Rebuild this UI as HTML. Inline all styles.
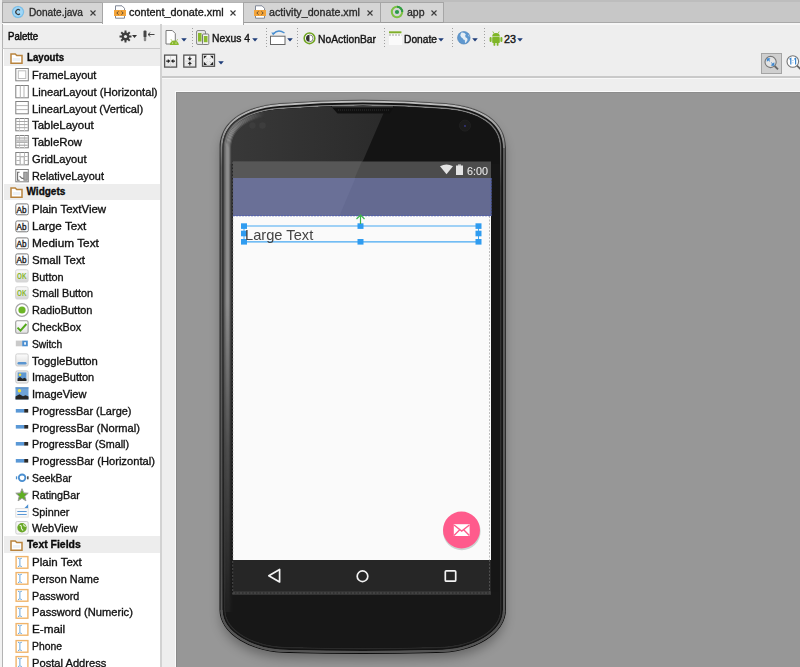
<!DOCTYPE html>
<html><head><meta charset="utf-8"><title>content_donate.xml</title>
<style>
*{margin:0;padding:0;box-sizing:border-box}
html,body{width:800px;height:667px;overflow:hidden;background:#eeeeee;font-family:"Liberation Sans",sans-serif}
.a{position:absolute}
.tb{-webkit-text-stroke:0.35px currentColor}
.tx{position:absolute;white-space:nowrap;transform-origin:0 0;font-family:"Liberation Sans",sans-serif;-webkit-text-stroke:0.32px currentColor}
svg{overflow:visible}
</style></head><body>
<div class="a" style="left:0;top:0;width:800px;height:24px;background:#c7c7c7"></div>
<div class="a" style="left:0;top:0;width:800px;height:2px;background:#bdbdbd"></div>
<div class="a" style="left:0;top:22px;width:800px;height:1px;background:#a9a9a9"></div>
<div class="a" style="left:0;top:23px;width:800px;height:1.5px;background:#f6f6f6"></div>
<div class="a" style="left:443px;top:2px;width:1px;height:20px;background:#b0b0b0"></div>
<div class="a" style="left:0;top:0;width:2px;height:24px;background:#ececec"></div>
<div class="a" style="left:2px;top:2px;width:101px;height:21px;background:#d5d5d5;border:1px solid #a6a6a6;border-bottom-color:#9c9c9c"></div>
<div class="a" style="left:102px;top:2px;width:142px;height:23px;background:#ffffff;border-left:1px solid #a6a6a6;border-right:1px solid #a6a6a6;border-top:1px solid #b4b4b4"></div>
<div class="a" style="left:243px;top:2px;width:138px;height:21px;background:#d5d5d5;border:1px solid #a6a6a6;border-bottom-color:#9c9c9c"></div>
<div class="a" style="left:380px;top:2px;width:64px;height:21px;background:#d5d5d5;border:1px solid #a6a6a6;border-bottom-color:#9c9c9c"></div>
<svg class="a" style="left:11px;top:5px" width="14" height="14" viewBox="0 0 14 14"><circle cx="7" cy="7" r="6.3" fill="#6ab9ec" stroke="#f2d9c0" stroke-width="0.5"/><circle cx="7" cy="7" r="5" fill="#9fd6f6"/><path d="M8.9 5.3A2.4 2.4 0 1 0 8.9 8.7" fill="none" stroke="#3b3b3b" stroke-width="1.2"/></svg>
<svg class="a" style="left:114px;top:4.5px" width="12" height="14" viewBox="0 0 12 14"><path d="M1.5 0.8H8L10.5 3.3V13.2H1.5Z" fill="#fff" stroke="#7f8796" stroke-width="1"/><rect x="0" y="5" width="12" height="6" fill="#f3a43a"/><path d="M4.6 6.3L2.8 8L4.6 9.7M7.4 6.3L9.2 8L7.4 9.7" fill="none" stroke="#5a4a30" stroke-width="0.9"/></svg>
<svg class="a" style="left:254px;top:4.5px" width="12" height="14" viewBox="0 0 12 14"><path d="M1.5 0.8H8L10.5 3.3V13.2H1.5Z" fill="#fff" stroke="#7f8796" stroke-width="1"/><rect x="0" y="5" width="12" height="6" fill="#f3a43a"/><path d="M4.6 6.3L2.8 8L4.6 9.7M7.4 6.3L9.2 8L7.4 9.7" fill="none" stroke="#5a4a30" stroke-width="0.9"/></svg>
<svg class="a" style="left:390px;top:5px" width="14" height="14" viewBox="0 0 14 14"><circle cx="7" cy="7" r="5.2" fill="none" stroke="#7cc143" stroke-width="2"/><path d="M7 1.8A5.2 5.2 0 0 1 12.2 7" fill="none" stroke="#2e9a46" stroke-width="2"/><circle cx="7" cy="7" r="2.1" fill="#2a9a4a"/></svg>
<svg class="a" style="left:89.5px;top:9.8px" width="6" height="6" viewBox="0 0 6 6"><path d="M0.5 0.5L5.5 5.5M5.5 0.5L0.5 5.5" stroke="#3c3c3c" stroke-width="1.1"/></svg>
<svg class="a" style="left:229.8px;top:9.8px" width="6" height="6" viewBox="0 0 6 6"><path d="M0.5 0.5L5.5 5.5M5.5 0.5L0.5 5.5" stroke="#3c3c3c" stroke-width="1.1"/></svg>
<svg class="a" style="left:367.3px;top:9.8px" width="6" height="6" viewBox="0 0 6 6"><path d="M0.5 0.5L5.5 5.5M5.5 0.5L0.5 5.5" stroke="#3c3c3c" stroke-width="1.1"/></svg>
<svg class="a" style="left:430.5px;top:9.8px" width="6" height="6" viewBox="0 0 6 6"><path d="M0.5 0.5L5.5 5.5M5.5 0.5L0.5 5.5" stroke="#3c3c3c" stroke-width="1.1"/></svg>
<div class="a" style="left:0;top:24px;width:2px;height:643px;background:#f2f2f2"></div>
<div class="a" style="left:2px;top:24px;width:158px;height:643px;background:#ffffff;border-left:1px solid #b3b3b3"></div>
<div class="a" style="left:2px;top:25px;width:158px;height:23.5px;background:#eeeeee;border-left:1px solid #b3b3b3;border-bottom:1.5px solid #c9c9c9"></div>
<svg class="a" style="left:119px;top:30px" width="13" height="13" viewBox="0 0 13 13"><g fill="#3e3e3e" transform="translate(6.5 6.5)"><rect x="-1" y="-6" width="2" height="3" transform="rotate(0)"/><rect x="-1" y="-6" width="2" height="3" transform="rotate(45)"/><rect x="-1" y="-6" width="2" height="3" transform="rotate(90)"/><rect x="-1" y="-6" width="2" height="3" transform="rotate(135)"/><rect x="-1" y="-6" width="2" height="3" transform="rotate(180)"/><rect x="-1" y="-6" width="2" height="3" transform="rotate(225)"/><rect x="-1" y="-6" width="2" height="3" transform="rotate(270)"/><rect x="-1" y="-6" width="2" height="3" transform="rotate(315)"/><circle r="3.9"/></g><circle cx="6.5" cy="6.5" r="1.6" fill="#ececec"/></svg>
<svg class="a" style="left:132px;top:35px" width="5" height="3" viewBox="0 0 5 3"><path d="M0 0H5L2.5 3Z" fill="#333"/></svg>
<svg class="a" style="left:142px;top:30px" width="14" height="12" viewBox="0 0 14 12"><rect x="1.5" y="0.5" width="3" height="7" rx="1" fill="#444"/><rect x="1.8" y="7" width="2.4" height="4.3" rx="1" fill="#888"/><path d="M6 4.5H12.5M6 4.5L8.3 2.5M6 4.5L8.3 6.5" stroke="#444" stroke-width="1" fill="none"/></svg>
<div class="a" style="left:4px;top:49.30px;width:156px;height:16.5px;background:#ededed"></div>
<svg class="a" style="left:9.5px;top:52.60px" width="13" height="11" viewBox="0 0 12.5 11"><path d="M0.75 1H5L6.5 2.5H11.75V10.25H0.75Z" fill="#fff" stroke="#b9843e" stroke-width="1.5"/><rect x="2.5" y="5" width="7.5" height="3" fill="#eef2f6"/></svg>
<svg class="a" style="left:15px;top:65.79px" width="14" height="17" viewBox="0 0 14 17"><rect x="0.8" y="2.5" width="12.5" height="12.3" rx="0" fill="#fff" stroke="#808080" stroke-width="1"/><rect x="3.3" y="4.8" width="7.5" height="7.7" fill="none" stroke="#bdbdbd" stroke-width="1"/></svg>
<svg class="a" style="left:15px;top:82.58px" width="14" height="17" viewBox="0 0 14 17"><rect x="0.8" y="2.5" width="12.5" height="12.3" rx="0" fill="#fff" stroke="#808080" stroke-width="1"/><path d="M5.3 2.5V14.8M9 2.5V14.8" stroke="#b5b5b5" stroke-width="1"/></svg>
<svg class="a" style="left:15px;top:99.37px" width="14" height="17" viewBox="0 0 14 17"><rect x="0.8" y="2.5" width="12.5" height="12.3" rx="0" fill="#fff" stroke="#808080" stroke-width="1"/><path d="M1 6.6H13M1 10.6H13" stroke="#b5b5b5" stroke-width="1"/></svg>
<svg class="a" style="left:15px;top:116.16px" width="14" height="17" viewBox="0 0 14 17"><rect x="0.8" y="2.5" width="12.5" height="12.3" rx="0" fill="#fff" stroke="#808080" stroke-width="1"/><path d="M4.5 2.5V14.8M9.5 2.5V14.8" stroke="#d4d4d4" stroke-width="1"/><path d="M1.3 5.5H12.7M1.3 8.6H12.7M1.3 11.7H12.7" stroke="#a6a6a6" stroke-width="1"/></svg>
<svg class="a" style="left:15px;top:132.95px" width="14" height="17" viewBox="0 0 14 17"><rect x="0.8" y="2.5" width="12.5" height="12.3" rx="0" fill="#fff" stroke="#808080" stroke-width="1"/><path d="M4.5 2.5V14.8M9.5 2.5V14.8" stroke="#d4d4d4" stroke-width="1"/><path d="M1.3 5H12.7M1.3 7.2H12.7M1.3 9.4H12.7M1.3 12.2H12.7" stroke="#9a9a9a" stroke-width="1"/><rect x="1.3" y="7.2" width="11.4" height="2.2" fill="#c8c8c8"/></svg>
<svg class="a" style="left:15px;top:149.74px" width="14" height="17" viewBox="0 0 14 17"><rect x="0.8" y="2.5" width="12.5" height="12.3" rx="0" fill="#fff" stroke="#808080" stroke-width="1"/><path d="M1.3 6.5H12.7M1.3 10.5H12.7M5 2.5V14.8M9.5 2.5V14.8" stroke="#b8b8b8" stroke-width="1"/><rect x="5.5" y="7" width="3.5" height="7.3" fill="#fff" stroke="#b8b8b8" stroke-width="0.8"/></svg>
<svg class="a" style="left:15px;top:166.53px" width="14" height="17" viewBox="0 0 14 17"><rect x="0.8" y="2.5" width="12.5" height="12.3" rx="0" fill="#fff" stroke="#808080" stroke-width="1"/><path d="M4.6 5.2H2.6V13.2H4.6M4.6 9.2L7 11.4H8.8" stroke="#6e6e6e" stroke-width="1.1" fill="none"/><rect x="8.8" y="5.2" width="3.4" height="8" fill="#a9a9a9" stroke="#777" stroke-width="0.8"/></svg>
<div class="a" style="left:4px;top:183.62px;width:156px;height:16.5px;background:#ededed"></div>
<svg class="a" style="left:9.5px;top:186.92px" width="13" height="11" viewBox="0 0 12.5 11"><path d="M0.75 1H5L6.5 2.5H11.75V10.25H0.75Z" fill="#fff" stroke="#b9843e" stroke-width="1.5"/><rect x="2.5" y="5" width="7.5" height="3" fill="#eef2f6"/></svg>
<svg class="a" style="left:15px;top:200.11px" width="14" height="17" viewBox="0 0 14 17"><rect x="0.8" y="3.9" width="12.5" height="10.9" rx="1.5" fill="#fff" stroke="#7a7a7a" stroke-width="1"/><text x="1.5" y="12.5" font-family="Liberation Sans" font-size="9.4" fill="#222" stroke="#222" stroke-width="0.4" textLength="10" lengthAdjust="spacingAndGlyphs">Ab</text></svg>
<svg class="a" style="left:15px;top:216.90px" width="14" height="17" viewBox="0 0 14 17"><rect x="0.8" y="3.9" width="12.5" height="10.9" rx="1.5" fill="#fff" stroke="#7a7a7a" stroke-width="1"/><text x="1.5" y="12.5" font-family="Liberation Sans" font-size="9.4" fill="#222" stroke="#222" stroke-width="0.4" textLength="10" lengthAdjust="spacingAndGlyphs">Ab</text></svg>
<svg class="a" style="left:15px;top:233.69px" width="14" height="17" viewBox="0 0 14 17"><rect x="0.8" y="3.9" width="12.5" height="10.9" rx="1.5" fill="#fff" stroke="#7a7a7a" stroke-width="1"/><text x="1.5" y="12.5" font-family="Liberation Sans" font-size="9.4" fill="#222" stroke="#222" stroke-width="0.4" textLength="10" lengthAdjust="spacingAndGlyphs">Ab</text></svg>
<svg class="a" style="left:15px;top:250.48px" width="14" height="17" viewBox="0 0 14 17"><rect x="0.8" y="3.9" width="12.5" height="10.9" rx="1.5" fill="#fff" stroke="#7a7a7a" stroke-width="1"/><text x="1.5" y="12.5" font-family="Liberation Sans" font-size="9.4" fill="#222" stroke="#222" stroke-width="0.4" textLength="10" lengthAdjust="spacingAndGlyphs">Ab</text></svg>
<svg class="a" style="left:15px;top:267.27px" width="14" height="17" viewBox="0 0 14 17"><defs><linearGradient id="okg" x1="0" y1="0" x2="0" y2="1"><stop offset="0" stop-color="#fbfbfb"/><stop offset="1" stop-color="#d4d4d4"/></linearGradient></defs><rect x="0.6" y="2.8" width="12.5" height="12.2" rx="1.5" fill="url(#okg)" stroke="#d6d6d6" stroke-width="1"/><text x="2.1" y="12.2" font-family="Liberation Sans" font-weight="bold" font-size="8.4" fill="#86b62a" textLength="9.4" lengthAdjust="spacingAndGlyphs">OK</text></svg>
<svg class="a" style="left:15px;top:284.06px" width="14" height="17" viewBox="0 0 14 17"><defs><linearGradient id="okg" x1="0" y1="0" x2="0" y2="1"><stop offset="0" stop-color="#fbfbfb"/><stop offset="1" stop-color="#d4d4d4"/></linearGradient></defs><rect x="0.6" y="2.8" width="12.5" height="12.2" rx="1.5" fill="url(#okg)" stroke="#d6d6d6" stroke-width="1"/><text x="2.1" y="12.2" font-family="Liberation Sans" font-weight="bold" font-size="8.4" fill="#86b62a" textLength="9.4" lengthAdjust="spacingAndGlyphs">OK</text></svg>
<svg class="a" style="left:15px;top:300.85px" width="14" height="17" viewBox="0 0 14 17"><circle cx="7" cy="9" r="6.3" fill="#fff" stroke="#a4a4a4" stroke-width="1.2"/><circle cx="7" cy="9" r="3.6" fill="#6cb526"/></svg>
<svg class="a" style="left:15px;top:317.64px" width="14" height="17" viewBox="0 0 14 17"><defs><linearGradient id="ckg" x1="0" y1="0" x2="0" y2="1"><stop offset="0" stop-color="#ffffff"/><stop offset="1" stop-color="#e2e2e2"/></linearGradient></defs><rect x="0.7" y="2.7" width="12.4" height="12.6" rx="1.5" fill="url(#ckg)" stroke="#9c9c9c" stroke-width="1.1"/><path d="M2.5 9.6L5.5 12.7L11.4 6" fill="none" stroke="#52a81a" stroke-width="1.9"/></svg>
<svg class="a" style="left:15px;top:334.43px" width="14" height="17" viewBox="0 0 14 17"><rect x="0.8" y="6.6" width="6.5" height="5.7" fill="#cacaca"/><rect x="7.2" y="6.6" width="5.6" height="5.7" fill="#4a8ed0"/><rect x="9.2" y="8.2" width="1.7" height="2.5" fill="#fff"/></svg>
<svg class="a" style="left:15px;top:351.22px" width="14" height="17" viewBox="0 0 14 17"><defs><linearGradient id="tgg" x1="0" y1="0" x2="0" y2="1"><stop offset="0" stop-color="#fdfdfd"/><stop offset="1" stop-color="#dcdcdc"/></linearGradient></defs><rect x="0.8" y="2.9" width="12.4" height="12.1" rx="1.5" fill="url(#tgg)" stroke="#cfcfcf" stroke-width="1"/><rect x="2.5" y="11" width="9" height="2.4" rx="1.2" fill="#5a95d0"/></svg>
<svg class="a" style="left:15px;top:368.01px" width="14" height="17" viewBox="0 0 14 17"><rect x="0.8" y="2.9" width="12.4" height="12.1" rx="1.5" fill="#ececec" stroke="#c6c6c6" stroke-width="1"/><rect x="2.6" y="4.4" width="8.8" height="8.6" fill="#5f98d2"/><path d="M2.6 13V10.5L5 9L7.5 10.8L9.5 9.7L11.4 11V13Z" fill="#262626"/><circle cx="5" cy="6.8" r="1.3" fill="#f6e03a"/></svg>
<svg class="a" style="left:15px;top:384.80px" width="14" height="17" viewBox="0 0 14 17"><rect x="0.5" y="2.4" width="13" height="12" fill="#6ea3d8"/><rect x="0.5" y="2.4" width="13" height="1" fill="#4f86c0"/><path d="M0.5 14.4V11.6L4.5 9.3L8 11.3L10.5 10.2L13.5 11.6V14.4Z" fill="#262626"/><circle cx="4.5" cy="5.8" r="1.7" fill="#f4e23a"/></svg>
<svg class="a" style="left:15px;top:401.59px" width="14" height="17" viewBox="0 0 14 17"><rect x="0.8" y="7" width="8.5" height="3.6" fill="#5a98d6"/><rect x="9.2" y="7" width="4" height="3.6" fill="#2a2a2a"/></svg>
<svg class="a" style="left:15px;top:418.38px" width="14" height="17" viewBox="0 0 14 17"><rect x="0.8" y="7" width="8.5" height="3.6" fill="#5a98d6"/><rect x="9.2" y="7" width="4" height="3.6" fill="#2a2a2a"/></svg>
<svg class="a" style="left:15px;top:435.17px" width="14" height="17" viewBox="0 0 14 17"><rect x="0.8" y="7" width="8.5" height="3.6" fill="#5a98d6"/><rect x="9.2" y="7" width="4" height="3.6" fill="#2a2a2a"/></svg>
<svg class="a" style="left:15px;top:451.96px" width="14" height="17" viewBox="0 0 14 17"><rect x="0.8" y="7" width="8.5" height="3.6" fill="#5a98d6"/><rect x="9.2" y="7" width="4" height="3.6" fill="#2a2a2a"/></svg>
<svg class="a" style="left:15px;top:468.75px" width="14" height="17" viewBox="0 0 14 17"><circle cx="7.1" cy="8.8" r="3.3" fill="#fff" stroke="#4b8fd0" stroke-width="1.8"/><rect x="0.9" y="7.3" width="1.3" height="3" fill="#4b8fd0"/><rect x="12.2" y="7.3" width="1.3" height="3" fill="#2a2a2a"/></svg>
<svg class="a" style="left:15px;top:485.54px" width="14" height="17" viewBox="0 0 14 17"><path d="M7 2.7L8.7 6.9L13.2 7.2L9.8 10.2L10.9 14.8L7 12.3L3.1 14.8L4.2 10.2L0.8 7.2L5.3 6.9Z" fill="#5fae22" stroke="#9a9a9a" stroke-width="1"/></svg>
<svg class="a" style="left:15px;top:502.33px" width="14" height="17" viewBox="0 0 14 17"><path d="M9.5 5.9L13.2 2.2V5.9Z" fill="#4a8ed0"/><rect x="0.8" y="6.5" width="12.4" height="8.6" fill="#fafafa" stroke="#dadada" stroke-width="0.8"/><path d="M2.3 9.5H11.7M2.3 12.5H11.7" stroke="#5a98d6" stroke-width="1"/></svg>
<svg class="a" style="left:15px;top:519.12px" width="14" height="17" viewBox="0 0 14 17"><rect x="0.8" y="2.5" width="12.4" height="12.5" rx="1.5" fill="#f6f6f6" stroke="#cdcdcd" stroke-width="1"/><circle cx="7" cy="8.7" r="4.7" fill="#6aa828"/><path d="M4.6 6.2Q6.6 6.3 6.3 8.2T8.2 11.5M8.6 5.2Q8.4 6.8 10.7 7.5" stroke="#e9f5dc" stroke-width="1.1" fill="none"/></svg>
<div class="a" style="left:4px;top:536.21px;width:156px;height:16.5px;background:#ededed"></div>
<svg class="a" style="left:9.5px;top:539.51px" width="13" height="11" viewBox="0 0 12.5 11"><path d="M0.75 1H5L6.5 2.5H11.75V10.25H0.75Z" fill="#fff" stroke="#b9843e" stroke-width="1.5"/><rect x="2.5" y="5" width="7.5" height="3" fill="#eef2f6"/></svg>
<svg class="a" style="left:15px;top:552.70px" width="14" height="17" viewBox="0 0 14 17"><rect x="1.1" y="3.6" width="11.8" height="11.6" fill="#fff" stroke="#f0b46a" stroke-width="1.4"/><path d="M3 5.3Q4.6 5.3 4.9 6.3V12.6Q4.6 13.5 3 13.5M6.8 5.3Q5.2 5.3 4.9 6.3M6.8 13.5Q5.2 13.5 4.9 12.6" fill="none" stroke="#6aa6dc" stroke-width="1"/></svg>
<svg class="a" style="left:15px;top:569.49px" width="14" height="17" viewBox="0 0 14 17"><rect x="1.1" y="3.6" width="11.8" height="11.6" fill="#fff" stroke="#f0b46a" stroke-width="1.4"/><path d="M3 5.3Q4.6 5.3 4.9 6.3V12.6Q4.6 13.5 3 13.5M6.8 5.3Q5.2 5.3 4.9 6.3M6.8 13.5Q5.2 13.5 4.9 12.6" fill="none" stroke="#6aa6dc" stroke-width="1"/></svg>
<svg class="a" style="left:15px;top:586.28px" width="14" height="17" viewBox="0 0 14 17"><rect x="1.1" y="3.6" width="11.8" height="11.6" fill="#fff" stroke="#f0b46a" stroke-width="1.4"/><path d="M3 5.3Q4.6 5.3 4.9 6.3V12.6Q4.6 13.5 3 13.5M6.8 5.3Q5.2 5.3 4.9 6.3M6.8 13.5Q5.2 13.5 4.9 12.6" fill="none" stroke="#6aa6dc" stroke-width="1"/></svg>
<svg class="a" style="left:15px;top:603.07px" width="14" height="17" viewBox="0 0 14 17"><rect x="1.1" y="3.6" width="11.8" height="11.6" fill="#fff" stroke="#f0b46a" stroke-width="1.4"/><path d="M3 5.3Q4.6 5.3 4.9 6.3V12.6Q4.6 13.5 3 13.5M6.8 5.3Q5.2 5.3 4.9 6.3M6.8 13.5Q5.2 13.5 4.9 12.6" fill="none" stroke="#6aa6dc" stroke-width="1"/></svg>
<svg class="a" style="left:15px;top:619.86px" width="14" height="17" viewBox="0 0 14 17"><rect x="1.1" y="3.6" width="11.8" height="11.6" fill="#fff" stroke="#f0b46a" stroke-width="1.4"/><path d="M3 5.3Q4.6 5.3 4.9 6.3V12.6Q4.6 13.5 3 13.5M6.8 5.3Q5.2 5.3 4.9 6.3M6.8 13.5Q5.2 13.5 4.9 12.6" fill="none" stroke="#6aa6dc" stroke-width="1"/></svg>
<svg class="a" style="left:15px;top:636.65px" width="14" height="17" viewBox="0 0 14 17"><rect x="1.1" y="3.6" width="11.8" height="11.6" fill="#fff" stroke="#f0b46a" stroke-width="1.4"/><path d="M3 5.3Q4.6 5.3 4.9 6.3V12.6Q4.6 13.5 3 13.5M6.8 5.3Q5.2 5.3 4.9 6.3M6.8 13.5Q5.2 13.5 4.9 12.6" fill="none" stroke="#6aa6dc" stroke-width="1"/></svg>
<svg class="a" style="left:15px;top:653.44px" width="14" height="17" viewBox="0 0 14 17"><rect x="1.1" y="3.6" width="11.8" height="11.6" fill="#fff" stroke="#f0b46a" stroke-width="1.4"/><path d="M3 5.3Q4.6 5.3 4.9 6.3V12.6Q4.6 13.5 3 13.5M6.8 5.3Q5.2 5.3 4.9 6.3M6.8 13.5Q5.2 13.5 4.9 12.6" fill="none" stroke="#6aa6dc" stroke-width="1"/></svg>
<div class="a" style="left:160px;top:24px;width:2px;height:643px;background:#d2d2d2"></div>
<div class="a" style="left:162px;top:76px;width:638px;height:1.5px;background:#c9c9c9"></div>
<div class="a" style="left:162px;top:77.5px;width:638px;height:1px;background:#f8f8f8"></div>
<div class="a" style="left:174.5px;top:90.5px;width:626px;height:577px;background:#fbfbfb"></div>
<div class="a" style="left:175.5px;top:91.5px;width:625px;height:576px;background:#979797;border-left:1px solid #8a8a8a;border-top:1px solid #8c8c8c"></div>
<svg class="a" style="left:0;top:0" width="800" height="60" viewBox="0 0 800 60"><path d="M166 30.5H172.3L175.3 33.5V44H166Z" fill="#fff" stroke="#7a7a7a" stroke-width="1"/><path d="M169.8 45A4.5 4.6 0 0 1 178.8 45Z" fill="#8ab92d"/><circle cx="172.6" cy="43" r="0.55" fill="#fff"/><circle cx="176" cy="43" r="0.55" fill="#fff"/><path d="M171 39.3L172 40.8M177.6 39.3L176.6 40.8" stroke="#8ab92d" stroke-width="0.8"/></svg>
<svg class="a" style="left:181px;top:38px" width="6" height="4" viewBox="0 0 6 4"><path d="M0.2 0.3H5.8L3 3.6Z" fill="#1e3c78"/></svg>
<div class="a" style="left:192px;top:28px;width:1px;height:21px;background:repeating-linear-gradient(#a0a0a0 0 1px,transparent 1px 3px)"></div>
<svg class="a" style="left:0;top:0" width="800" height="60" viewBox="0 0 800 60"><rect x="196.5" y="30.5" width="9" height="14" rx="1.5" fill="#e6e6e6" stroke="#8a8a8a" stroke-width="1"/><rect x="198" y="33" width="3.5" height="8.5" fill="#8ab92d"/><rect x="202.5" y="34" width="6.3" height="10.5" rx="1" fill="#f2f2f2" stroke="#7a7a7a" stroke-width="1"/><rect x="203.8" y="36" width="3.7" height="6.2" fill="#8ab92d"/></svg>
<svg class="a" style="left:251.5px;top:38px" width="6" height="4" viewBox="0 0 6 4"><path d="M0.2 0.3H5.8L3 3.6Z" fill="#1e3c78"/></svg>
<div class="a" style="left:266px;top:28px;width:1px;height:21px;background:repeating-linear-gradient(#a0a0a0 0 1px,transparent 1px 3px)"></div>
<svg class="a" style="left:0;top:0" width="800" height="60" viewBox="0 0 800 60"><rect x="270.5" y="36.2" width="14.5" height="8.3" fill="#fff" stroke="#666" stroke-width="1"/><path d="M273.5 33.8Q278 28.5 284.5 33" fill="none" stroke="#4a8fd0" stroke-width="1.4"/><path d="M271.3 32.5L273.2 35.6L275.2 32.8Z" fill="#4a8fd0"/></svg>
<svg class="a" style="left:286.5px;top:38px" width="6" height="4" viewBox="0 0 6 4"><path d="M0.2 0.3H5.8L3 3.6Z" fill="#1e3c78"/></svg>
<div class="a" style="left:297px;top:28px;width:1px;height:21px;background:repeating-linear-gradient(#a0a0a0 0 1px,transparent 1px 3px)"></div>
<svg class="a" style="left:302.5px;top:31.5px" width="14" height="13" viewBox="0 0 14 13"><circle cx="6.5" cy="6.3" r="5.3" fill="#fff" stroke="#6fa31f" stroke-width="1.6"/><path d="M6.5 2.8A3.5 3.5 0 0 0 6.5 9.8Z" fill="#333"/><path d="M6.5 2.8A3.5 3.5 0 0 1 6.5 9.8" fill="none" stroke="#555" stroke-width="0.7"/></svg>
<div class="a" style="left:383.5px;top:28px;width:1px;height:21px;background:repeating-linear-gradient(#a0a0a0 0 1px,transparent 1px 3px)"></div>
<svg class="a" style="left:388.5px;top:30.5px" width="13" height="14" viewBox="0 0 13 14"><rect x="0" y="0" width="13" height="14" fill="#fafafa"/><rect x="0" y="0.3" width="12.5" height="2" fill="#7fae2a"/><path d="M0 4H12.5" stroke="#8a8a8a" stroke-width="0.8" stroke-dasharray="2 1"/></svg>
<svg class="a" style="left:437.5px;top:38px" width="6" height="4" viewBox="0 0 6 4"><path d="M0.2 0.3H5.8L3 3.6Z" fill="#1e3c78"/></svg>
<div class="a" style="left:452px;top:28px;width:1px;height:21px;background:repeating-linear-gradient(#a0a0a0 0 1px,transparent 1px 3px)"></div>
<svg class="a" style="left:456.5px;top:30.5px" width="14" height="14" viewBox="0 0 14 14"><circle cx="6.8" cy="6.8" r="6.3" fill="#5f98cf" stroke="#4a7fb5" stroke-width="0.6"/><path d="M4.5 1.6Q7.5 1.3 8.8 3.2Q7.6 4.6 8.6 6.2Q10.8 6.6 10.6 9Q9.6 10.8 8.4 12.3Q7.6 10.5 7.8 9Q6 8.8 5.6 7.2Q3.9 6.6 3.3 4.6Q3.6 2.6 4.5 1.6Z" fill="#e4edf5"/><path d="M11 3.2Q12.2 4.2 12.4 5.8Q11.4 5.2 11 3.2Z" fill="#e4edf5"/></svg>
<svg class="a" style="left:471.5px;top:38px" width="6" height="4" viewBox="0 0 6 4"><path d="M0.2 0.3H5.8L3 3.6Z" fill="#1e3c78"/></svg>
<div class="a" style="left:484px;top:28px;width:1px;height:21px;background:repeating-linear-gradient(#a0a0a0 0 1px,transparent 1px 3px)"></div>
<svg class="a" style="left:488.5px;top:30.5px" width="14" height="15" viewBox="0 0 14 15"><path d="M3.2 5.5A3.8 3.6 0 0 1 10.8 5.5Z" fill="#7fb627"/><path d="M3.8 0.5L5 2.6M10.2 0.5L9 2.6" stroke="#7fb627" stroke-width="0.8"/><rect x="3.2" y="6" width="7.6" height="6" rx="0.8" fill="#7fb627"/><rect x="0.6" y="6" width="2" height="5" rx="1" fill="#7fb627"/><rect x="11.4" y="6" width="2" height="5" rx="1" fill="#7fb627"/><rect x="4.5" y="11" width="1.8" height="3.8" rx="0.9" fill="#7fb627"/><rect x="7.7" y="11" width="1.8" height="3.8" rx="0.9" fill="#7fb627"/></svg>
<svg class="a" style="left:517px;top:38px" width="6" height="4" viewBox="0 0 6 4"><path d="M0.2 0.3H5.8L3 3.6Z" fill="#1e3c78"/></svg>
<svg class="a" style="left:0;top:0" width="800" height="80" viewBox="0 0 800 80"><defs><linearGradient id="r2g" x1="0" y1="0" x2="0" y2="1"><stop offset="0" stop-color="#fafafa"/><stop offset="1" stop-color="#e4e4e4"/></linearGradient></defs><rect x="164.6" y="55.1" width="12" height="12" fill="url(#r2g)" stroke="#555" stroke-width="1.3"/><path d="M170.6 56V66.5" stroke="#d0d0d0" stroke-width="0.8"/><path d="M166.2 61.1H169M175 61.1H172.2" stroke="#222" stroke-width="1.1"/><path d="M170.3 61.1L167.8 59V63.2Z M170.9 61.1L173.4 59V63.2Z" fill="#222"/><rect x="183.8" y="55.1" width="12" height="12" fill="url(#r2g)" stroke="#555" stroke-width="1.3"/><path d="M184.5 61.1H195" stroke="#d0d0d0" stroke-width="0.8"/><path d="M189.8 56.6V59.3M189.8 65.6V62.9" stroke="#222" stroke-width="1.1"/><path d="M189.8 60.8L187.7 58.3H191.9Z M189.8 61.4L187.7 63.9H191.9Z" fill="#222"/><rect x="202.5" y="54.3" width="12" height="12" fill="url(#r2g)" stroke="#555" stroke-width="1.3"/><path d="M205.5 57.3L207.5 59.3M211.5 57.3L209.5 59.3M205.5 63.3L207.5 61.3M211.5 63.3L209.5 61.3" stroke="#bbb" stroke-width="0.7"/><path d="M203.9 55.7H207L203.9 58.8Z M213.1 55.7H210L213.1 58.8Z M203.9 64.9H207L203.9 61.8Z M213.1 64.9H210L213.1 61.8Z" fill="#222"/></svg>
<svg class="a" style="left:217.5px;top:60.5px" width="6" height="4" viewBox="0 0 6 4"><path d="M0.2 0.3H5.8L3 3.6Z" fill="#1e3c78"/></svg>
<div class="a" style="left:761px;top:52.5px;width:21px;height:21px;background:#cfcfcf;border:1px solid #a4a4a4"></div>
<svg class="a" style="left:0;top:0" width="800" height="80" viewBox="0 0 800 80"><circle cx="770.6" cy="62" r="5.6" fill="#e4e4e4" stroke="#777" stroke-width="1.1"/><path d="M774.6 66L778 69.4" stroke="#666" stroke-width="1.8"/><path d="M767.3 61.2V58.7H769.8Z M773.9 62.8V65.3H771.4Z" fill="#3b86cf" stroke="#3b86cf" stroke-width="0.9"/><path d="M768.2 59.6L770 61.4M773 64.4L771.2 62.6" stroke="#3b86cf" stroke-width="1"/><circle cx="792.8" cy="61.5" r="5.8" fill="#fff" stroke="#777" stroke-width="1.1"/><path d="M797 65.7L800.5 69.2" stroke="#666" stroke-width="1.8"/><path d="M789.5 59.2L790.8 58.3V64.5M794.3 59.2L795.6 58.3V64.5" stroke="#3b86cf" stroke-width="1.2" fill="none"/><path d="M792.9 60.3V60.9M792.9 62.6V63.2" stroke="#3b86cf" stroke-width="0.9"/></svg>
<svg class="a" style="left:0;top:0" width="800" height="667" viewBox="0 0 800 667">
<defs>
<linearGradient id="stripg" x1="0" y1="0" x2="1" y2="0">
<stop offset="0" stop-color="#000" stop-opacity="0.5"/><stop offset="0.2" stop-color="#fff" stop-opacity="0.05"/><stop offset="0.45" stop-color="#fff" stop-opacity="0.42"/><stop offset="0.75" stop-color="#fff" stop-opacity="0.2"/><stop offset="1" stop-color="#000" stop-opacity="0.3"/>
</linearGradient>
<linearGradient id="stripv" x1="0" y1="0" x2="0" y2="1">
<stop offset="0" stop-color="#fff"/><stop offset="0.35" stop-color="#fff"/><stop offset="0.7" stop-color="#777"/><stop offset="1" stop-color="#222"/>
</linearGradient>
<mask id="stripm"><rect x="210" y="95" width="60" height="560" fill="url(#stripv2)"/></mask><linearGradient id="stripv2" x1="0" y1="0" x2="0" y2="1"><stop offset="0" stop-color="#fff"/><stop offset="0.37" stop-color="#fff"/><stop offset="0.63" stop-color="#777"/><stop offset="0.9" stop-color="#1a1a1a"/><stop offset="1" stop-color="#000"/></linearGradient><linearGradient id="striphg" x1="0" y1="0" x2="1" y2="0"><stop offset="0" stop-color="#fff"/><stop offset="0.3" stop-color="#fff"/><stop offset="1" stop-color="#000"/></linearGradient><mask id="striph"><rect x="215" y="95" width="50" height="560" fill="url(#striphg)"/></mask>
<radialGradient id="shadowg" cx="0.5" cy="0.5" r="0.5"><stop offset="0" stop-color="#000" stop-opacity="0.35"/><stop offset="1" stop-color="#000" stop-opacity="0"/></radialGradient>
<linearGradient id="rimg" x1="0" y1="0" x2="0" y2="1"><stop offset="0" stop-color="#c0c0c0"/><stop offset="0.05" stop-color="#a0a0a0"/><stop offset="0.12" stop-color="#606060"/><stop offset="0.85" stop-color="#505050"/><stop offset="1" stop-color="#5a5a5a"/></linearGradient><linearGradient id="rimg2" x1="0" y1="0" x2="0" y2="1"><stop offset="0" stop-color="#8a8a8a"/><stop offset="0.06" stop-color="#707070"/><stop offset="0.15" stop-color="#3a3a3a"/><stop offset="1" stop-color="#2a2a2a"/></linearGradient><filter id="shblur" x="-20%" y="-20%" width="140%" height="140%"><feGaussianBlur stdDeviation="6"/></filter><linearGradient id="outg" x1="0" y1="0" x2="0" y2="1"><stop offset="0" stop-color="#6a6a6a"/><stop offset="0.1" stop-color="#3a3a3a"/><stop offset="0.6" stop-color="#2a2a2a"/><stop offset="1" stop-color="#0a0a0a"/></linearGradient><linearGradient id="bezl" x1="0" y1="0" x2="1" y2="0"><stop offset="0" stop-color="#3a3a3a"/><stop offset="1" stop-color="#2a2a2a"/></linearGradient><clipPath id="bodyclip2"><path d="M222.00 148 C222.00 122.50 245.00 108.40 279.50 105.50 Q363 98.50 446.00 105.50 C480.50 108.40 503.50 122.50 503.50 148 V610 A67.50 40.50 0 0 1 436.00 650.50 Q363 652.50 289.50 650.50 A67.50 40.50 0 0 1 222.00 610 Z"/></clipPath><clipPath id="bodyclip"><path d="M225.70 148 C225.70 124.72 247.22 111.91 279.50 109.20 Q363 102.20 446.00 109.20 C478.28 111.91 499.80 124.72 499.80 148 V610 A63.80 36.80 0 0 1 436.00 646.80 Q363 648.80 289.50 646.80 A63.80 36.80 0 0 1 225.70 610 Z"/></clipPath>
</defs>
<path d="M221.50 148 C221.50 122.20 244.70 107.92 279.50 105.00 Q363 98.00 446.00 105.00 C480.80 107.92 504.00 122.20 504.00 148 V610 A68.00 41.00 0 0 1 436.00 651.00 Q363 653.00 289.50 651.00 A68.00 41.00 0 0 1 221.50 610 Z" fill="#000" opacity="0.33" transform="translate(0 7)" filter="url(#shblur)"/>
<path d="M219.50 148 C219.50 121.00 243.50 106.02 279.50 103.00 Q363 96.00 446.00 103.00 C482.00 106.02 506.00 121.00 506.00 148 V610 A70.00 43.00 0 0 1 436.00 653.00 Q363 655.00 289.50 653.00 A70.00 43.00 0 0 1 219.50 610 Z" fill="url(#outg)"/>
<path d="M220.20 148 C220.20 121.42 243.92 106.69 279.50 103.70 Q363 96.70 446.00 103.70 C481.58 106.69 505.30 121.42 505.30 148 V610 A69.30 42.30 0 0 1 436.00 652.30 Q363 654.30 289.50 652.30 A69.30 42.30 0 0 1 220.20 610 Z" fill="#141414"/>
<path d="M221.50 148 C221.50 122.20 244.70 107.92 279.50 105.00 Q363 98.00 446.00 105.00 C480.80 107.92 504.00 122.20 504.00 148 V610 A68.00 41.00 0 0 1 436.00 651.00 Q363 653.00 289.50 651.00 A68.00 41.00 0 0 1 221.50 610 Z" fill="none" stroke="url(#rimg)" stroke-width="2"/>
<path d="M225.00 148 C225.00 124.30 246.80 111.25 279.50 108.50 Q363 101.50 446.00 108.50 C478.70 111.25 500.50 124.30 500.50 148 V610 A64.50 37.50 0 0 1 436.00 647.50 Q363 649.50 289.50 647.50 A64.50 37.50 0 0 1 225.00 610 Z" fill="none" stroke="url(#rimg2)" stroke-width="1.6"/>
<path d="M221.50 612 V610 A68.00 41.00 0 0 0 289.50 651.00 Q363 653.00 436.00 651.00 A68.00 41.00 0 0 0 504.00 610 V612" fill="none" stroke="#555" stroke-width="2.2"/>
<path d="M225.70 148 C225.70 124.72 247.22 111.91 279.50 109.20 Q363 102.20 446.00 109.20 C478.28 111.91 499.80 124.72 499.80 148 V610 A63.80 36.80 0 0 1 436.00 646.80 Q363 648.80 289.50 646.80 A63.80 36.80 0 0 1 225.70 610 Z" fill="#1a1a1a"/>
<g clip-path="url(#bodyclip)">
<rect x="215" y="95" width="300" height="70" fill="#141414"/>
<path d="M215 95 H388 L383.4 113.5 L361.6 164 H215 Z" fill="url(#bezl)"/>
<rect x="215" y="164" width="300" height="500" fill="#161616"/>
<rect x="215" y="592" width="300" height="70" fill="#171717"/>
</g>
<g clip-path="url(#bodyclip2)"><g mask="url(#stripm)"><g mask="url(#striph)">
<path d="M223.10 612 V148 C223.10 123.16 245.66 109.44 279.50 106.60" fill="none" stroke="#333333" stroke-width="1.2"/>
<path d="M224.20 612 V148 C224.20 123.82 246.32 110.49 279.50 107.70" fill="none" stroke="#606060" stroke-width="1.2"/>
<path d="M225.30 612 V148 C225.30 124.48 246.98 111.53 279.50 108.80" fill="none" stroke="#7a7a7a" stroke-width="1.2"/>
<path d="M226.40 612 V148 C226.40 125.14 247.64 112.58 279.50 109.90" fill="none" stroke="#8a8a8a" stroke-width="1.2"/>
<path d="M227.50 612 V148 C227.50 125.80 248.30 113.62 279.50 111.00" fill="none" stroke="#8e8e8e" stroke-width="1.2"/>
<path d="M228.60 612 V148 C228.60 126.46 248.96 114.67 279.50 112.10" fill="none" stroke="#8a8a8a" stroke-width="1.2"/>
<path d="M229.70 612 V148 C229.70 127.12 249.62 115.71 279.50 113.20" fill="none" stroke="#7a7a7a" stroke-width="1.2"/>
<path d="M230.80 612 V148 C230.80 127.78 250.28 116.75 279.50 114.30" fill="none" stroke="#555555" stroke-width="1.2"/>
<path d="M231.90 612 V148 C231.90 128.44 250.94 117.80 279.50 115.40" fill="none" stroke="#383838" stroke-width="1.2"/>
</g></g></g>
<rect x="503" y="148" width="2.2" height="464" fill="#5a5a5a"/>
<path d="M331 106.3 H394 L389.7 113.5 H337.5 Z" fill="#101010"/>
<path d="M332 106.8 H393" stroke="#4a4a4a" stroke-width="1"/>
<path d="M338 110 H389" stroke="#262626" stroke-width="1.5" stroke-dasharray="1 1"/>
<circle cx="252.5" cy="125.5" r="3.2" fill="#3d3d3d"/><circle cx="262.5" cy="125.6" r="3.3" fill="#3d3d3d"/>
<circle cx="465" cy="125.6" r="5.5" fill="#1b1b1b" stroke="#202020" stroke-width="1"/><circle cx="465" cy="126" r="0.9" fill="#3a3a8a"/>
<rect x="233" y="161.5" width="258" height="16.5" fill="#4c4c4c"/>
<path d="M233 161.5 H361.8 L354.8 178 H233 Z" fill="#575757"/>
<rect x="233" y="178" width="258.5" height="38" fill="#646a91"/>
<path d="M233 178 H355.5 L339.4 216 H233 Z" fill="#6a7097"/>
<rect x="233" y="216" width="258" height="344" fill="#fafafa"/>
<rect x="233" y="560" width="258" height="31" fill="#262626"/>
<rect x="233" y="591" width="258" height="4" fill="#333"/>
<path d="M233 593 H491" stroke="#525252" stroke-width="1.2" stroke-dasharray="2 1.5"/>
<path d="M232.7 162 V595" stroke="#555" stroke-width="0.8" stroke-dasharray="2 1.5"/>
<path d="M489.5 216 V560" stroke="#b5b5b5" stroke-width="0.9" stroke-dasharray="2 1.5"/>
<path d="M489.5 560 V592" stroke="#555" stroke-width="0.9" stroke-dasharray="2 1.5"/>
<path d="M233 215.8 H491 M491 178 V216" stroke="#4a5ab8" stroke-width="0.8" stroke-dasharray="2 1"/>
<path d="M440 166.3 Q446.5 162.8 453 166.3 L446.5 174.3 Z" fill="#e4e4e4"/>
<rect x="456" y="165.5" width="7" height="9.5" fill="#e4e4e4"/><rect x="458" y="164.5" width="3" height="1.2" fill="#e4e4e4"/>
<path d="M279.6 569.5 V582 L268.8 575.75 Z" fill="none" stroke="#f2f2f2" stroke-width="1.7" stroke-linejoin="round"/>
<circle cx="362.5" cy="576.25" r="5.3" fill="none" stroke="#f2f2f2" stroke-width="1.7"/>
<rect x="445.3" y="570.8" width="10.4" height="10.4" rx="1" fill="none" stroke="#f2f2f2" stroke-width="1.7"/>
<path d="M244 226 H478.5 M244 241.8 H478.5" stroke="#45a8f2" stroke-width="1.2"/>
<path d="M244 226 V242 M478.5 226 V242" stroke="#45a8f2" stroke-width="1"/>
<g fill="#2f9cf0"><rect x="241" y="223.3" width="6" height="5.6"/><rect x="241" y="230.7" width="6" height="5.6"/><rect x="241" y="239" width="6" height="5.6"/><rect x="357.5" y="223.3" width="6" height="5.6"/><rect x="357.5" y="239" width="6" height="5.6"/><rect x="475.5" y="223.3" width="6" height="5.6"/><rect x="475.5" y="230.7" width="6" height="5.6"/><rect x="475.5" y="239" width="6" height="5.6"/></g>
<path d="M360.5 224 V215 M356.5 219 L360.5 215 L364.5 219" fill="none" stroke="#3bb54a" stroke-width="1.2"/>
<circle cx="461.8" cy="531.5" r="18.8" fill="#c5d0cd" opacity="0.9"/>
<circle cx="461.5" cy="530" r="18.5" fill="#ff5b8c"/>
<rect x="453.8" y="524.2" width="15.8" height="11.8" fill="#fff"/>
<path d="M454 525 L461.7 531 L469.4 525 M454 535.5 L459.5 530 M469.4 535.5 L463.9 530" fill="none" stroke="#ff5b8c" stroke-width="1.4"/>
</svg>
<span class="tx" style="left:28.50px;top:8.00px;font-size:10px;line-height:10px;color:#2b2b2b;transform:scaleX(1.0118);">Donate.java</span>
<span class="tx" style="left:128.70px;top:8.00px;font-size:10px;line-height:10px;color:#1a1a1a;transform:scaleX(1.0839);">content_donate.xml</span>
<span class="tx" style="left:269.00px;top:8.00px;font-size:10px;line-height:10px;color:#2b2b2b;transform:scaleX(1.0701);">activity_donate.xml</span>
<span class="tx" style="left:407.00px;top:8.00px;font-size:10px;line-height:10px;color:#2b2b2b;transform:scaleX(1.0489);">app</span>
<span class="tx" style="left:7.50px;top:31.74px;font-size:10.3px;line-height:10.3px;color:#0a0a0a;-webkit-text-stroke:0.45px currentColor;transform:scaleX(0.9358);">Palette</span>
<span class="tx" style="left:26.50px;top:52.60px;font-size:10.0px;line-height:10.0px;color:#0a0a0a;font-weight:bold;transform:scaleX(0.9651);">Layouts</span>
<span class="tx" style="left:32.00px;top:70.08px;font-size:10.6px;line-height:10.6px;color:#111111;transform:scaleX(1.0318);">FrameLayout</span>
<span class="tx" style="left:32.00px;top:86.87px;font-size:10.6px;line-height:10.6px;color:#111111;transform:scaleX(1.0559);">LinearLayout (Horizontal)</span>
<span class="tx" style="left:32.00px;top:103.66px;font-size:10.6px;line-height:10.6px;color:#111111;transform:scaleX(1.0491);">LinearLayout (Vertical)</span>
<span class="tx" style="left:32.00px;top:120.45px;font-size:10.6px;line-height:10.6px;color:#111111;transform:scaleX(1.0800);">TableLayout</span>
<span class="tx" style="left:32.00px;top:137.24px;font-size:10.6px;line-height:10.6px;color:#111111;transform:scaleX(1.0749);">TableRow</span>
<span class="tx" style="left:32.00px;top:154.03px;font-size:10.6px;line-height:10.6px;color:#111111;transform:scaleX(1.0517);">GridLayout</span>
<span class="tx" style="left:32.00px;top:170.82px;font-size:10.6px;line-height:10.6px;color:#111111;transform:scaleX(1.0260);">RelativeLayout</span>
<span class="tx" style="left:26.50px;top:186.92px;font-size:10.0px;line-height:10.0px;color:#0a0a0a;font-weight:bold;">Widgets</span>
<span class="tx" style="left:32.00px;top:204.40px;font-size:10.6px;line-height:10.6px;color:#111111;transform:scaleX(1.0815);">Plain TextView</span>
<span class="tx" style="left:32.00px;top:221.19px;font-size:10.6px;line-height:10.6px;color:#111111;transform:scaleX(1.1018);">Large Text</span>
<span class="tx" style="left:32.00px;top:237.98px;font-size:10.6px;line-height:10.6px;color:#111111;transform:scaleX(1.1174);">Medium Text</span>
<span class="tx" style="left:32.00px;top:254.77px;font-size:10.6px;line-height:10.6px;color:#111111;transform:scaleX(1.0888);">Small Text</span>
<span class="tx" style="left:32.00px;top:271.56px;font-size:10.6px;line-height:10.6px;color:#111111;transform:scaleX(1.0317);">Button</span>
<span class="tx" style="left:32.00px;top:288.35px;font-size:10.6px;line-height:10.6px;color:#111111;transform:scaleX(1.0173);">Small Button</span>
<span class="tx" style="left:32.00px;top:305.14px;font-size:10.6px;line-height:10.6px;color:#111111;transform:scaleX(1.0359);">RadioButton</span>
<span class="tx" style="left:32.00px;top:321.93px;font-size:10.6px;line-height:10.6px;color:#111111;transform:scaleX(1.0169);">CheckBox</span>
<span class="tx" style="left:32.00px;top:338.72px;font-size:10.6px;line-height:10.6px;color:#111111;transform:scaleX(0.9679);">Switch</span>
<span class="tx" style="left:32.00px;top:355.51px;font-size:10.6px;line-height:10.6px;color:#111111;transform:scaleX(1.0640);">ToggleButton</span>
<span class="tx" style="left:32.00px;top:372.30px;font-size:10.6px;line-height:10.6px;color:#111111;transform:scaleX(1.0354);">ImageButton</span>
<span class="tx" style="left:32.00px;top:389.09px;font-size:10.6px;line-height:10.6px;color:#111111;transform:scaleX(1.0438);">ImageView</span>
<span class="tx" style="left:32.00px;top:405.88px;font-size:10.6px;line-height:10.6px;color:#111111;transform:scaleX(1.0368);">ProgressBar (Large)</span>
<span class="tx" style="left:32.00px;top:422.67px;font-size:10.6px;line-height:10.6px;color:#111111;transform:scaleX(1.0474);">ProgressBar (Normal)</span>
<span class="tx" style="left:32.00px;top:439.46px;font-size:10.6px;line-height:10.6px;color:#111111;transform:scaleX(1.0182);">ProgressBar (Small)</span>
<span class="tx" style="left:32.00px;top:456.25px;font-size:10.6px;line-height:10.6px;color:#111111;transform:scaleX(1.0543);">ProgressBar (Horizontal)</span>
<span class="tx" style="left:32.00px;top:473.04px;font-size:10.6px;line-height:10.6px;color:#111111;transform:scaleX(0.9771);">SeekBar</span>
<span class="tx" style="left:32.00px;top:489.83px;font-size:10.6px;line-height:10.6px;color:#111111;transform:scaleX(1.0147);">RatingBar</span>
<span class="tx" style="left:32.00px;top:506.62px;font-size:10.6px;line-height:10.6px;color:#111111;transform:scaleX(1.0243);">Spinner</span>
<span class="tx" style="left:32.00px;top:523.41px;font-size:10.6px;line-height:10.6px;color:#111111;transform:scaleX(1.0257);">WebView</span>
<span class="tx" style="left:26.50px;top:539.51px;font-size:10.0px;line-height:10.0px;color:#0a0a0a;font-weight:bold;transform:scaleX(1.0428);">Text Fields</span>
<span class="tx" style="left:32.00px;top:556.99px;font-size:10.6px;line-height:10.6px;color:#111111;transform:scaleX(1.0887);">Plain Text</span>
<span class="tx" style="left:32.00px;top:573.78px;font-size:10.6px;line-height:10.6px;color:#111111;transform:scaleX(1.0345);">Person Name</span>
<span class="tx" style="left:32.00px;top:590.57px;font-size:10.6px;line-height:10.6px;color:#111111;transform:scaleX(1.0148);">Password</span>
<span class="tx" style="left:32.00px;top:607.36px;font-size:10.6px;line-height:10.6px;color:#111111;transform:scaleX(1.0516);">Password (Numeric)</span>
<span class="tx" style="left:32.00px;top:624.15px;font-size:10.6px;line-height:10.6px;color:#111111;transform:scaleX(1.1060);">E-mail</span>
<span class="tx" style="left:32.00px;top:640.94px;font-size:10.6px;line-height:10.6px;color:#111111;transform:scaleX(0.9761);">Phone</span>
<span class="tx" style="left:32.00px;top:657.73px;font-size:10.6px;line-height:10.6px;color:#111111;transform:scaleX(1.0526);">Postal Address</span>
<span class="tx" style="left:211.60px;top:33.02px;font-size:10.8px;line-height:10.8px;color:#161616;-webkit-text-stroke:0.4px currentColor;transform:scaleX(0.9594);">Nexus 4</span>
<span class="tx" style="left:317.70px;top:33.52px;font-size:10.8px;line-height:10.8px;color:#161616;-webkit-text-stroke:0.4px currentColor;transform:scaleX(0.9569);">NoActionBar</span>
<span class="tx" style="left:403.60px;top:33.52px;font-size:10.8px;line-height:10.8px;color:#161616;-webkit-text-stroke:0.4px currentColor;transform:scaleX(0.9478);">Donate</span>
<span class="tx" style="left:504.00px;top:33.52px;font-size:10.8px;line-height:10.8px;color:#161616;-webkit-text-stroke:0.4px currentColor;">23</span>
<span class="tx" style="left:467.00px;top:165.67px;font-size:10.5px;line-height:10.5px;color:#e6e6e6;-webkit-text-stroke:0.1px currentColor;transform:scaleX(1.0276);">6:00</span>
<span class="tx" style="left:244.70px;top:227.79px;font-size:14.6px;line-height:14.6px;color:#444444;-webkit-text-stroke:0px currentColor;transform:scaleX(1.0052);">Large Text</span>
</body></html>
